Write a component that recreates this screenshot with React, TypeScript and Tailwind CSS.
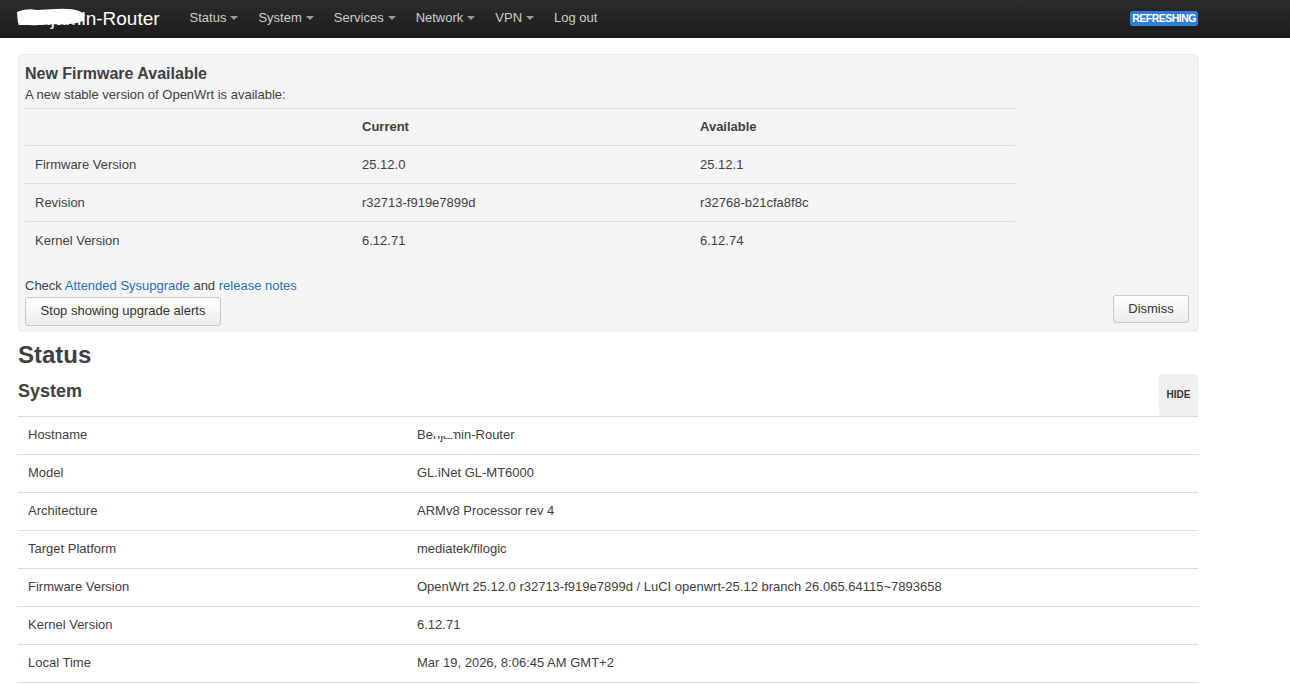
import type { ReactNode } from "react";

const NAV = ["Status", "System", "Services", "Network", "VPN"];

const FW_ROWS = [
  { label: "Firmware Version", current: "25.12.0", available: "25.12.1" },
  { label: "Revision", current: "r32713-f919e7899d", available: "r32768-b21cfa8f8c" },
  { label: "Kernel Version", current: "6.12.71", available: "6.12.74" },
];

const SYSTEM_ROWS = [
  { label: "Model", value: "GL.iNet GL-MT6000" },
  { label: "Architecture", value: "ARMv8 Processor rev 4" },
  { label: "Target Platform", value: "mediatek/filogic" },
  {
    label: "Firmware Version",
    value: "OpenWrt 25.12.0 r32713-f919e7899d / LuCI openwrt-25.12 branch 26.065.64115~7893658",
  },
  { label: "Kernel Version", value: "6.12.71" },
  { label: "Local Time", value: "Mar 19, 2026, 8:06:45 AM GMT+2" },
];

function Caret() {
  return (
    <span className="ml-[4px] inline-block h-0 w-0 border-x-[4px] border-t-[4px] border-x-transparent border-t-[#9a9a9a] align-middle" />
  );
}

function Header() {
  return (
    <header className="h-[38px] bg-gradient-to-b from-[#2c2c2c] to-[#1c1c1c]">
      <div className="ml-[17px] flex h-full w-[1181px] items-center pb-[2px]">
        <a className="relative text-[19px] leading-none text-white">
          Benjamin-Router
          {/* redaction blob over the name */}
          <svg className="absolute left-[-2px] top-[-3px]" width="72" height="22" viewBox="0 0 72 22">
            <path d="M2 6 Q10 2 22 4 L40 3 Q56 2 64 5 L70 8 L68 15 Q58 19 44 18 L24 19 Q10 20 3 17 Z" fill="#fff" />
          </svg>
        </a>
        <nav className="ml-[20px] flex items-center text-[13px] text-[#cfcfcf]">
          {NAV.map((item) => (
            <a key={item} className="flex items-center px-[10px]">
              {item}
              <Caret />
            </a>
          ))}
          <a className="px-[10px]">Log out</a>
        </nav>
        <span className="ml-auto rounded-[3px] bg-[#2f7ed8] px-[2px] text-[10.5px] font-bold leading-[15px] tracking-[-0.5px] text-white">
          REFRESHING
        </span>
      </div>
    </header>
  );
}

function Btn({ children, className = "" }: { children: ReactNode; className?: string }) {
  return (
    <button
      className={`rounded-[3px] border border-[#c8c8c8] bg-gradient-to-b from-white to-[#ececec] text-[13px] text-[#333] shadow-[inset_0_1px_0_#fff] ${className}`}
    >
      {children}
    </button>
  );
}

function FirmwareAlert() {
  return (
    <div className="rounded-[3px] border border-[#ececec] bg-[#f5f5f5] px-[6px] pb-[4px] pt-[8px] shadow-[1px_1px_1px_rgba(0,0,0,0.04)]">
      <h4 className="text-[16px] font-bold leading-[22px]">New Firmware Available</h4>
      <p className="leading-[20px]">A new stable version of OpenWrt is available:</p>
      <table className="mt-[3px] w-[990px] border-collapse">
        <thead>
          <tr className="h-[37px] border-t border-[#dcdcdc] text-left">
            <th className="w-[327px]" />
            <th className="w-[338px] pl-[10px] font-bold">Current</th>
            <th className="pl-[10px] font-bold">Available</th>
          </tr>
        </thead>
        <tbody>
          {FW_ROWS.map((row) => (
            <tr key={row.label} className="h-[38px] border-t border-[#dcdcdc]">
              <td className="pl-[10px]">{row.label}</td>
              <td className="pl-[10px]">{row.current}</td>
              <td className="pl-[10px]">{row.available}</td>
            </tr>
          ))}
        </tbody>
      </table>
      <div className="mt-[17px] flex items-end justify-between">
        <div>
          <p className="leading-[17px]">
            Check <a className="text-[#1f6fbd]">Attended Sysupgrade</a> and{" "}
            <a className="text-[#1f6fbd]">release notes</a>
          </p>
          <Btn className="mt-[3px] h-[29px] w-[196px]">Stop showing upgrade alerts</Btn>
        </div>
        <Btn className="mb-[3px] mr-[2px] h-[28px] w-[76px]">Dismiss</Btn>
      </div>
    </div>
  );
}

function SystemSection() {
  return (
    <section>
      <div className="flex items-end justify-between">
        <h3 className="mb-[14px] text-[18px] font-bold leading-[22px]">System</h3>
        <button className="h-[42px] w-[39px] rounded-[3px] bg-[#f0f0f0] text-[10px] font-bold text-[#333]">
          HIDE
        </button>
      </div>
      <table className="w-full border-collapse">
        <tbody>
          <tr className="h-[38px] border-t border-[#dcdcdc]">
            <td className="w-[389px] pl-[10px]">Hostname</td>
            <td className="pl-[10px]">
              <span className="relative">
                Benjamin-Router
                <span className="absolute left-[17px] top-[-1px] h-[10px] w-[13px] bg-white" />
                <span className="absolute left-[28px] top-[-1px] h-[12px] w-[8px] bg-white" />
              </span>
            </td>
          </tr>
          {SYSTEM_ROWS.map((row) => (
            <tr key={row.label} className="h-[38px] border-t border-[#dcdcdc]">
              <td className="pl-[10px]">{row.label}</td>
              <td className="pl-[10px]">{row.value}</td>
            </tr>
          ))}
          <tr className="border-t border-[#dcdcdc]">
            <td colSpan={2} />
          </tr>
        </tbody>
      </table>
    </section>
  );
}

export default function App() {
  return (
    <div className="min-h-[684px] bg-white font-['Liberation_Sans',Arial,sans-serif] text-[13px] text-[#404040]">
      <Header />
      <main className="ml-[18px] w-[1180px] pt-[16px]">
        <FirmwareAlert />
        <h2 className="mt-[9px] text-[24px] font-bold leading-[30px]">Status</h2>
        <div className="mt-[4px]">
          <SystemSection />
        </div>
      </main>
    </div>
  );
}
